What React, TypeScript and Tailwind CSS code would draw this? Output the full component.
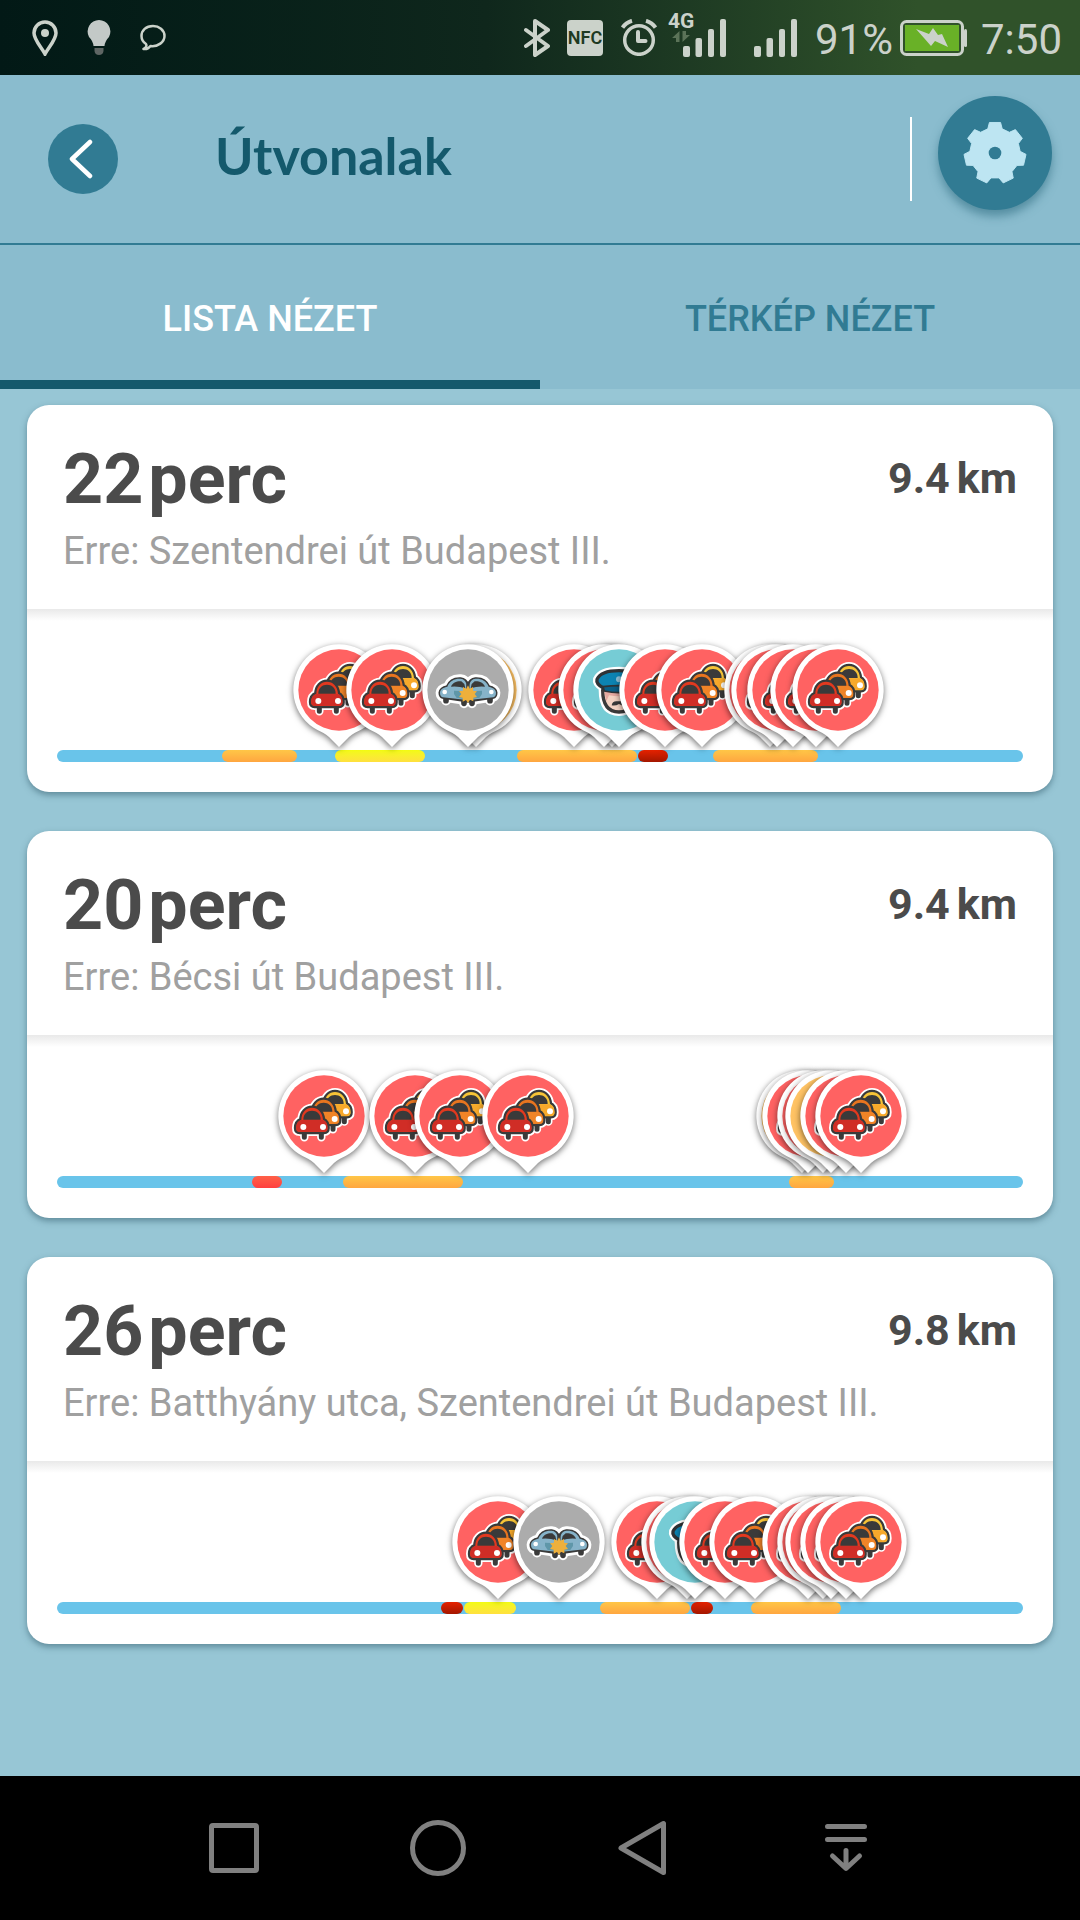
import { useState } from "react";

type PinKind = "jam" | "crash" | "police" | "hazard";
type Traffic = "orange" | "yellow" | "red" | "darkred";

interface Route {
  minutes: number;
  distance: string;
  via: string;
  /** Traffic segments, [from, to] in units of the track's length. */
  segments: { kind: Traffic; from: number; to: number }[];
  /** Reports along the way, painted in this order. */
  pins: { kind: PinKind; at: number }[];
}

const TRACK_LENGTH = 966;
const percent = (value: number) => `${(value / TRACK_LENGTH) * 100}%`;

const routes: Route[] = [
  {
    minutes: 22,
    distance: "9.4",
    via: "Erre: Szentendrei út Budapest III.",
    segments: [
      { kind: "orange", from: 165, to: 240 },
      { kind: "yellow", from: 278, to: 368 },
      { kind: "orange", from: 460, to: 580 },
      { kind: "darkred", from: 581, to: 611 },
      { kind: "orange", from: 656, to: 761 },
    ],
    pins: [
      { kind: "jam", at: 282 },
      { kind: "jam", at: 335 },
      { kind: "hazard", at: 419 },
      { kind: "crash", at: 411 },
      { kind: "jam", at: 517 },
      { kind: "jam", at: 555 },
      { kind: "jam", at: 547 },
      { kind: "police", at: 562 },
      { kind: "jam", at: 608 },
      { kind: "jam", at: 645 },
      { kind: "jam", at: 713 },
      { kind: "jam", at: 720 },
      { kind: "jam", at: 736 },
      { kind: "jam", at: 759 },
      { kind: "jam", at: 781 },
    ],
  },
  {
    minutes: 20,
    distance: "9.4",
    via: "Erre: Bécsi út Budapest III.",
    segments: [
      { kind: "red", from: 195, to: 225 },
      { kind: "orange", from: 286, to: 406 },
      { kind: "orange", from: 732, to: 777 },
    ],
    pins: [
      { kind: "jam", at: 267 },
      { kind: "jam", at: 358 },
      { kind: "jam", at: 403 },
      { kind: "jam", at: 471 },
      { kind: "hazard", at: 745 },
      { kind: "jam", at: 751 },
      { kind: "jam", at: 766 },
      { kind: "hazard", at: 774 },
      { kind: "jam", at: 789 },
      { kind: "jam", at: 804 },
    ],
  },
  {
    minutes: 26,
    distance: "9.8",
    via: "Erre: Batthyány utca, Szentendrei út Budapest III.",
    segments: [
      { kind: "darkred", from: 384, to: 406 },
      { kind: "yellow", from: 407, to: 459 },
      { kind: "orange", from: 543, to: 633 },
      { kind: "darkred", from: 634, to: 656 },
      { kind: "orange", from: 694, to: 784 },
    ],
    pins: [
      { kind: "jam", at: 441 },
      { kind: "crash", at: 502 },
      { kind: "jam", at: 600 },
      { kind: "jam", at: 630 },
      { kind: "police", at: 638 },
      { kind: "jam", at: 668 },
      { kind: "jam", at: 698 },
      { kind: "jam", at: 751 },
      { kind: "jam", at: 766 },
      { kind: "jam", at: 774 },
      { kind: "jam", at: 789 },
      { kind: "jam", at: 804 },
    ],
  },
];

const segmentFill: Record<Traffic, string> = {
  orange: "from-[#ffc647] to-[#ffa640]",
  yellow: "from-[#f2fb10] to-[#ffe03e]",
  red: "from-[#ff6048] to-[#ff3f3f]",
  darkred: "from-[#e62200] to-[#a31700]",
};

const pinFill: Record<PinKind, string> = {
  jam: "#ff6262",
  crash: "#acacac",
  police: "#76ccd5",
  hazard: "#ffc364",
};

const pinLabel: Record<PinKind, string> = {
  jam: "Dugó",
  crash: "Baleset",
  police: "Rendőr",
  hazard: "Veszély",
};

/* ---------- map pin artwork ---------- */

const CAR_BODY =
  "M-84 36Q-84 17 -68 11C-68 -11 -53 -25 -36 -25S-4 -11 -3 11Q11 17 11 36Q11 48 0 48H-73Q-84 48 -84 36Z";
const CAR_WINDOW = "M-62 11C-62 -7 -50 -16 -36 -16S-10 -7 -10 11Z";
const CAR_TIRES = "M-59 50V64M-8 50V64";

const cars = [
  { x: 69, y: -47, top: "#f7c437", body: "#f7a92b" },
  { x: 35, y: -24, top: "#e8751f", body: "#f08427" },
  { x: 0, y: 0, top: "#e2391f", body: "#d02d26" },
];

function JamArt() {
  return (
    <g>
      {cars.map((car) => (
        <g key={car.x} transform={`translate(${car.x} ${car.y})`} stroke="#fff" strokeLinejoin="round" strokeLinecap="round" fill="none">
          <path d={CAR_BODY} strokeWidth="24" />
          <path d={CAR_TIRES} strokeWidth="25" />
        </g>
      ))}
      {cars.map((car) => (
        <g key={car.x} transform={`translate(${car.x} ${car.y})`}>
          <path d={CAR_TIRES} stroke="#3a3a3a" strokeWidth="15" strokeLinecap="round" />
          <path d={CAR_BODY} fill="#3a3a3a" stroke="#3a3a3a" strokeWidth="13" strokeLinejoin="round" />
          <path d={CAR_BODY} fill={car.top} />
          <path d="M-82 26Q-80 17 -68 12H-3Q7 17 9 26L10 38Q9 47 0 47H-73Q-82 46 -83 38Z" fill={car.body} />
          <path d={CAR_WINDOW} fill="#3a3a3a" />
          <circle cx="-62" cy="33" r="9" fill="#fff" />
          <circle cx="-3" cy="33" r="9" fill="#fff" />
        </g>
      ))}
    </g>
  );
}

const CRASH_BODY =
  "M-84 8C-83 -4 -72 -8 -62 -10C-55 -28 -40 -35 -22 -34C-10 -33 -4 -26 0 -14V33L-76 22Q-84 19 -84 8Z";
const CRASH_TIRES = "M-66 24V32M-12 32V40";

function CrashArt() {
  const sides = ["", "scale(-1 1)"];
  return (
    <g>
      {sides.map((t) => (
        <g key={t} transform={t} stroke="#fff" fill="none" strokeLinejoin="round" strokeLinecap="round">
          <path d={CRASH_BODY} strokeWidth="26" />
          <path d={CRASH_TIRES} strokeWidth="29" />
        </g>
      ))}
      {sides.map((t) => (
        <g key={t} transform={t}>
          <path d={CRASH_TIRES} stroke="#3a3a3a" strokeWidth="17" strokeLinecap="round" />
          <path d={CRASH_BODY} fill="#3a3a3a" stroke="#3a3a3a" strokeWidth="9" strokeLinejoin="round" />
          <path d="M-84 8C-83 -4 -72 -8 -62 -10C-55 -28 -40 -35 -22 -34C-12 -33 -7 -27 -5 -18L-3 30L-76 22Q-84 19 -84 8Z" fill="#86b3c9" />
          <path d="M-42 2L-3 4V28L-34 24L-42 12Z" fill="#5f97a9" />
          <path d="M-51 -10C-46 -22 -34 -27 -20 -26L-11 -18L-8 -5Q-28 -12 -51 -10Z" fill="#3a3a3a" />
          <circle cx="-70" cy="6" r="7" fill="#fff" />
        </g>
      ))}
      <path
        d="M0 -14L5 -4L15 -9L15 2L27 4L20 12L27 21L16 23L16 34L6 29L0 39L-6 30L-16 35L-16 23L-27 21L-20 12L-27 4L-15 2L-15 -9L-5 -4Z"
        fill="#eeb03c"
      />
    </g>
  );
}

const CAP = "M-66 -32C-58 -50 -30 -58 0 -58S58 -50 66 -32C69 -20 58 -12 47 -6H-47C-58 -12 -69 -20 -66 -32Z";
const FACE = "M-49 0C-49 42 -34 66 0 66S49 42 49 0Z";

function PoliceArt() {
  return (
    <g strokeLinejoin="round">
      <path d={CAP} stroke="#fff" strokeWidth="24" />
      <path d={FACE} stroke="#fff" strokeWidth="24" />
      <path d={FACE} fill="#f4d3c3" stroke="#3a3a3a" strokeWidth="10" />
      <path d="M-44 4H44L38 16Q0 22 -30 16L-38 34Z" fill="#e5a9a0" />
      <path d={CAP} fill="#0c83b2" stroke="#2f3336" strokeWidth="10" />
      <path d="M-48 -10Q0 -16 48 -10L44 3Q0 13 -44 3Z" fill="#0a5f87" stroke="#2f3336" strokeWidth="5" />
      <circle cy="-32" r="9" fill="#8fc0d6" />
      <path d="M-22 46Q-20 34 -8 34H8Q20 34 22 46Q10 48 0 42Q-10 48 -22 46Z" fill="#3a3a3a" />
    </g>
  );
}

function Pin({ kind, at }: { kind: PinKind; at: number }) {
  return (
    <svg
      role="img"
      aria-label={pinLabel[kind]}
      viewBox="-150 -150 300 324"
      className="absolute bottom-[14px] h-[108px] w-[100px] -translate-x-1/2 drop-shadow-[0_2px_3px_rgba(0,0,0,0.55)]"
      style={{ left: percent(at) }}
    >
      <path d="M-48 128A137 137 0 1 1 48 128Q38 133 30 141L0 171L-30 141Q-38 133 -48 128Z" fill="#fff" />
      <circle r="122" fill={pinFill[kind]} />
      {kind === "jam" && <JamArt />}
      {kind === "crash" && <CrashArt />}
      {kind === "police" && <PoliceArt />}
    </svg>
  );
}

function RouteCard({ route }: { route: Route }) {
  return (
    <article className="rounded-[22px] bg-white shadow-[0_3px_6px_rgba(40,80,95,0.5)]">
      <div className="flex items-start justify-between px-9 pt-[39px] pb-[34px]">
        <div>
          <h2 className="flex gap-[5px] text-[70px] leading-[70px] font-bold text-[#4b4b4b]">
            <span>{route.minutes}</span>
            <span>perc</span>
          </h2>
          <p className="mt-[13px] text-[38px] leading-[48px] text-[#a0a0a0]">{route.via}</p>
        </div>
        <p className="mt-[10px] flex gap-[7px] text-[43px] leading-[48px] font-bold text-[#4b4b4b]">
          <span>{route.distance}</span>
          <span>km</span>
        </p>
      </div>
      <div className="h-[141px] bg-linear-to-b from-[#e9e9e9] to-white to-[12px]" />
      <div className="px-[30px] pb-[30px]">
        <div className="relative h-3 rounded-full bg-[#69c4ea]">
          {route.segments.map((s) => (
            <div
              key={s.from}
              className={`absolute h-3 rounded-full bg-linear-to-b ${segmentFill[s.kind]}`}
              style={{ left: percent(s.from), width: percent(s.to - s.from) }}
            />
          ))}
          {route.pins.map((p) => (
            <Pin key={p.at} kind={p.kind} at={p.at} />
          ))}
        </div>
      </div>
    </article>
  );
}

/* ---------- status bar ---------- */

function Signal() {
  return (
    <svg viewBox="0 0 43 38" className="h-[38px] w-[43px]" fill="currentColor">
      <rect x="0" y="27" width="7" height="11" rx="2" />
      <rect x="12.500" y="19" width="6.500" height="19" rx="2" />
      <rect x="25" y="10" width="6" height="28" rx="2" />
      <rect x="37" y="0" width="6" height="38" rx="2" />
    </svg>
  );
}

function StatusBar() {
  return (
    <div className="flex h-[75px] items-center justify-between bg-linear-to-r from-[#021916] via-[#0f271c] via-45% to-[#30522a] to-85% pr-[18px] pl-8 text-[#cbd2ca]">
      <div className="flex items-center gap-[29px]">
        <svg viewBox="0 0 26 36" className="h-9 w-[26px]" fill="none" stroke="currentColor" strokeWidth="3.500">
          <path d="M13 34C10 28 2 20 2 13A11 11 0 0 1 24 13C24 20 16 28 13 34Z" />
          <circle cx="13" cy="13" r="4" fill="currentColor" stroke="none" />
        </svg>
        <svg viewBox="0 0 24 36" className="h-9 w-6">
          <path d="M12 0A11.500 11.500 0 0 1 22 17Q18 21 17.500 26H6.500Q6 21 2 17A11.500 11.500 0 0 1 12 0Z" fill="#c3c9c7" />
          <path d="M7.500 28H16.500V31Q16 35 12 35T7.500 31Z" fill="#5f6664" />
        </svg>
        <svg viewBox="0 0 26 27" className="h-[27px] w-[26px]" fill="none" stroke="currentColor" strokeWidth="2.500" strokeLinejoin="round">
          <path d="M13 2C6 2 1.500 6.500 1.500 12C1.500 15 3 18 6 20C7 22 6 24 3.500 25C6.500 25.500 9 24 10.500 22C18 23 24.500 18 24.500 12C24.500 6 19 2 13 2Z" />
        </svg>
      </div>
      <div className="flex items-center">
        <svg viewBox="0 0 28 38" className="h-[38px] w-7" fill="none" stroke="currentColor" strokeWidth="4" strokeLinecap="round" strokeLinejoin="round">
          <path d="M3 11L25 27L12 36V2L25 11L3 27" />
        </svg>
        <span className="ml-4 flex h-9 w-9 items-center justify-center rounded-[4px] bg-[#cbd2ca] text-[18px] leading-none font-semibold text-[#1e3a22]">
          NFC
        </span>
        <svg viewBox="0 0 36 37" className="ml-[18px] h-[37px] w-9" fill="none" stroke="currentColor" strokeWidth="3.500">
          <circle cx="18" cy="21" r="14.300" />
          <path d="M17 13V22H24.500" strokeWidth="4" strokeLinecap="round" strokeLinejoin="round" />
          <path d="M1.500 8.500Q5 3.500 11 1.800M34.500 8.500Q31 3.500 25 1.800" strokeWidth="4" />
        </svg>
        <div className="relative ml-[26px]">
          <Signal />
          <span className="absolute -top-[8px] -left-[15px] text-[21px] leading-[21px] font-bold">4G</span>
          <svg viewBox="0 0 18 12" className="absolute top-3 -left-[11px] h-3 w-[18px]" fill="#5b7358">
            <path d="M7.500 0V11H4V7H0ZM10.500 0H14V4H18L10.500 11Z" />
          </svg>
        </div>
        <div className="ml-[28px]">
          <Signal />
        </div>
        <span className="mt-1 ml-[18px] text-[42px] leading-[48px]">91%</span>
        <svg viewBox="0 0 67 36" className="ml-[7px] h-9 w-[67px]">
          <rect x="1.500" y="1.500" width="61" height="33" rx="5" fill="none" stroke="currentColor" strokeWidth="3" />
          <rect x="64" y="9" width="3" height="18" rx="1.500" fill="currentColor" />
          <rect x="5" y="5" width="54" height="26" fill="#69b127" />
          <path d="M16 9L29 14L33 8L38 15L42 14L48 27L35 21L31 26L24 18Z" fill="currentColor" />
        </svg>
        <span className="mt-1 ml-[14px] text-[42px] leading-[48px]">7:50</span>
      </div>
    </div>
  );
}

/* ---------- header ---------- */

const GEAR_TEETH = 7;
const gearPath = (() => {
  const at = (radius: number, angle: number) =>
    `${(radius * Math.sin(angle)).toFixed(2)} ${(-radius * Math.cos(angle)).toFixed(2)}`;
  let d = "";
  for (let i = 0; i < GEAR_TEETH; i++) {
    const a = (i * 2 * Math.PI) / GEAR_TEETH;
    d += `${i === 0 ? "M" : "L"}${at(26, a - 0.29)}L${at(32, a - 0.18)}L${at(32, a + 0.18)}L${at(26, a + 0.29)}`;
  }
  return `${d}Z`;
})();

function Header() {
  return (
    <header className="flex h-[170px] items-center border-b-2 border-[#317b93] bg-[#8abcce] pr-7 pl-12">
      <button type="button" aria-label="Vissza" className="flex size-[70px] items-center justify-center rounded-full bg-[#317b93]">
        <svg viewBox="0 0 24 40" className="mr-1 h-10 w-6" fill="none" stroke="#fff" strokeWidth="4.500" strokeLinecap="round" strokeLinejoin="round">
          <path d="M21 3L3 20L21 37" />
        </svg>
      </button>
      <h1 className="mb-2 ml-[97px] font-[Lato,sans-serif] text-[52px] leading-[60px] font-bold text-[#14596c]">Útvonalak</h1>
      <div className="ml-auto h-[84px] w-0.5 bg-white" />
      <button
        type="button"
        aria-label="Beállítások"
        className="mb-3 ml-[26px] flex size-[114px] items-center justify-center rounded-full bg-[#317b93] shadow-[0_6px_10px_rgba(49,110,130,0.6)]"
      >
        <svg viewBox="-33 -33 66 66" className="size-16">
          <path d={gearPath} fill="#bde5f2" stroke="#bde5f2" strokeWidth="1" strokeLinejoin="round" />
          <circle r="6.500" fill="#317b93" />
        </svg>
      </button>
    </header>
  );
}

const tabs = ["LISTA NÉZET", "TÉRKÉP NÉZET"];

function Tabs({ active, onSelect }: { active: number; onSelect: (i: number) => void }) {
  return (
    <div role="tablist" className="grid h-36 grid-cols-2 bg-[#8abcce]">
      {tabs.map((label, i) => (
        <button
          key={label}
          type="button"
          role="tab"
          aria-selected={i === active}
          onClick={() => onSelect(i)}
          className={`border-b-[9px] pt-3 text-[36px] leading-[48px] font-medium ${
            i === active ? "border-[#14596c] text-white" : "border-transparent text-[#317b93]"
          }`}
        >
          {label}
        </button>
      ))}
    </div>
  );
}

/* ---------- system navigation ---------- */

const navItems = [
  { label: "Legutóbbi alkalmazások", art: <rect x="7.500" y="7.500" width="45" height="45" rx="1.500" /> },
  { label: "Kezdőképernyő", art: <circle cx="30" cy="30" r="25.500" /> },
  { label: "Vissza", art: <path d="M51.500 5.500V54.500L9 30Z" /> },
  {
    label: "Értesítések",
    art: <path d="M11.500 8.500H48.500M11.500 21.500H48.500M30 32.500V50M16.500 38L30 50.500L43.500 38" />,
  },
];

function NavBar() {
  return (
    <nav className="flex h-36 items-center justify-center bg-black">
      {navItems.map((item) => (
        <button key={item.label} type="button" aria-label={item.label} className="flex h-full max-w-[204px] flex-1 items-center justify-center">
          <svg viewBox="0 0 60 60" className="size-[60px]" fill="none" stroke="#808080" strokeWidth="5" strokeLinecap="round" strokeLinejoin="round">
            {item.art}
          </svg>
        </button>
      ))}
    </nav>
  );
}

export default function App() {
  const [tab, setTab] = useState(0);
  return (
    <div className="flex min-h-screen flex-col bg-[#97c6d5] font-[Roboto,sans-serif]">
      <StatusBar />
      <Header />
      <Tabs active={tab} onSelect={setTab} />
      <main className="flex flex-1 flex-col gap-[39px] px-[27px] pt-4 pb-10">
        {routes.map((route) => (
          <RouteCard key={route.via} route={route} />
        ))}
      </main>
      <NavBar />
    </div>
  );
}
